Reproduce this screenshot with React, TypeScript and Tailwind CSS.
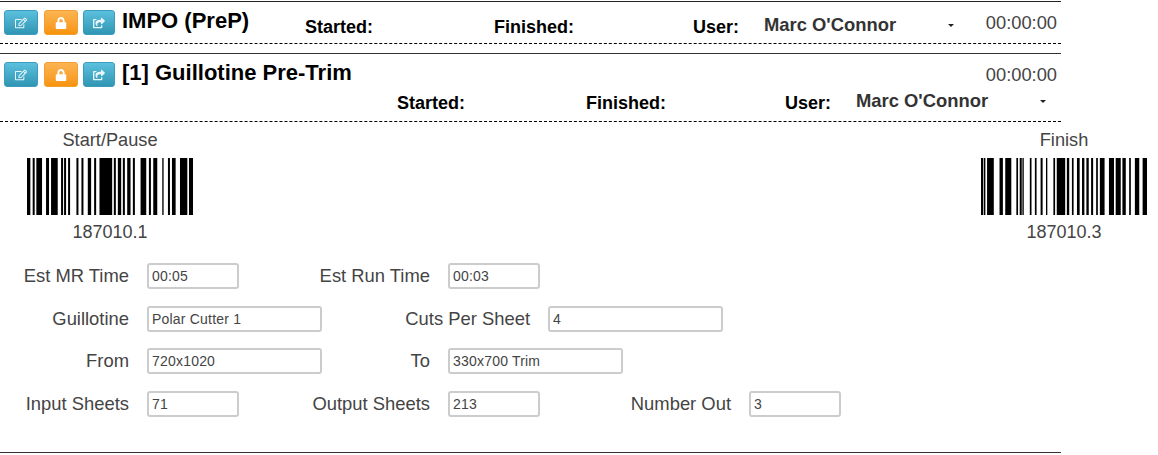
import { FaLock, FaRegEdit, FaShareSquare } from 'react-icons/fa';

// bar positions as [start, end], read off the picture at 3x
const startBars = [
  [80, 90], [97, 103], [108, 125], [137, 146], [152, 172], [182, 188], [191, 197], [203, 209],
  [228, 234], [243, 249], [262, 272], [281, 287], [297, 335], [340, 346], [352, 362], [367, 373],
  [380, 390], [397, 403], [420, 437], [445, 451], [458, 470], [485, 489], [502, 508], [514, 525],
  [538, 560], [565, 577],
];
const finishBars = [
  [65, 71], [73, 78], [83, 103], [120, 130], [137, 155], [170, 175], [180, 186], [188, 192],
  [210, 215], [225, 230], [242, 248], [258, 262], [280, 285], [290, 315], [320, 327], [335, 340],
  [350, 358], [365, 372], [378, 385], [392, 398], [407, 412], [418, 432], [445, 460], [465, 480],
  [485, 495], [505, 510], [522, 535], [545, 558],
];

const Barcode = ({ title, value, bars }: { title: string; value: string; bars: number[][] }) => {
  const first = bars[0][0];
  const last = bars[bars.length - 1][1];
  return (
    <div className="flex w-[166px] flex-col items-center">
      <div className="h-[27px] text-[18.2px] leading-[37px] text-[#444]">{title}</div>
      <svg className="mt-[9px] block h-[57px] w-[166px]" viewBox={`${first} 0 ${last - first} 57`} preserveAspectRatio="none">
        {bars.map(([a, b]) => (
          <rect key={a} x={a} y={0} width={b - a} height={57} fill="#000" />
        ))}
      </svg>
      <div className="mt-[6px] text-[18px] leading-[23px] text-[#444]">{value}</div>
    </div>
  );
};

const Buttons = () => {
  const blue = 'flex h-[25px] items-center justify-center rounded-[3px] border border-[#3b9cbc] bg-gradient-to-b from-[#5bc0de] to-[#2f96b4] text-[12px] text-[#e8f6fa]';
  return (
    <div className="flex">
      <button className={`${blue} w-[34px]`}><FaRegEdit /></button>
      <button className="ml-[6px] flex h-[25px] w-[34px] items-center justify-center rounded-[3px] border border-[#f0a033] bg-gradient-to-b from-[#fbb450] to-[#f89406] text-[12px] text-[#fff]"><FaLock /></button>
      <button className={`${blue} ml-[5px] w-[32px]`}><FaShareSquare /></button>
    </div>
  );
};

const Meta = () => (
  <div className="flex items-center text-[18px] leading-[20px]">
    <b className="w-[189px] font-bold text-black">Started:</b>
    <b className="w-[199px] font-bold text-black">Finished:</b>
    <b className="w-[71px] font-bold text-black">User:</b>
    <span className="mb-[3px] w-[184px] text-[18.4px] font-bold text-[#333]">Marc O'Connor</span>
    <span className="mb-[2px] h-0 w-0 border-x-[3px] border-t-[3px] border-x-transparent border-t-[#222]" />
  </div>
);

const Field = ({ label, value, labelW, inputW }: { label: string; value: string; labelW: string; inputW: string }) => (
  <>
    <label className={`${labelW} text-right text-[18.4px] leading-[26px] text-[#444]`}>{label}</label>
    <input
      readOnly
      value={value}
      className={`${inputW} ml-[18px] h-[26px] rounded-[3px] border-2 border-[#ccc] px-[3px] text-[14px] tracking-[0.2px] text-[#444] outline-none`}
    />
  </>
);

export default function App() {
  return (
    <div className="h-[455px] w-[1158px] overflow-hidden bg-white pt-px font-['Liberation_Sans',Arial,sans-serif]">
      <div className="w-[1061px]">
        <div className="flex h-[43px] items-start border-t border-b border-t-[#222] border-b-black pl-1 pt-[8px] [border-bottom-style:dashed]">
          <Buttons />
          <h1 className="ml-[7px] w-[183px] text-[22px] leading-[22px] font-bold text-black">IMPO (PreP)</h1>
          <div className="mt-[5px]"><Meta /></div>
          <span className="ml-auto mr-[4px] mt-[3px] text-[18.3px] leading-[20px] text-[#444]">00:00:00</span>
        </div>
        <div className="mt-[9px] h-[69px] border-t border-b border-t-[#333] border-b-black pl-1 pt-[8px] [border-bottom-style:dashed]">
          <div className="flex items-start">
            <Buttons />
            <h1 className="ml-[7px] text-[22px] leading-[22px] font-bold text-black">[1] Guillotine Pre-Trim</h1>
            <span className="ml-auto mr-[4px] mt-[3px] text-[18.3px] leading-[20px] text-[#444]">00:00:00</span>
          </div>
          <div className="mt-[4px] pl-[393px]"><Meta /></div>
        </div>
      </div>

      <div className="flex justify-between pl-[27px] pr-[11px]">
        <Barcode title="Start/Pause" value="187010.1" bars={startBars} />
        <Barcode title="Finish" value="187010.3" bars={finishBars} />
      </div>

      <div className="mt-[19px] flex flex-col gap-[16.5px]">
        <div className="flex items-center">
          <Field label="Est MR Time" value="00:05" labelW="w-[129px]" inputW="w-[92px]" />
          <Field label="Est Run Time" value="00:03" labelW="w-[191px]" inputW="w-[92px]" />
        </div>
        <div className="flex items-center">
          <Field label="Guillotine" value="Polar Cutter 1" labelW="w-[129px]" inputW="w-[175px]" />
          <Field label="Cuts Per Sheet" value="4" labelW="w-[208px]" inputW="w-[175px]" />
        </div>
        <div className="flex items-center">
          <Field label="From" value="720x1020" labelW="w-[129px]" inputW="w-[175px]" />
          <Field label="To" value="330x700 Trim" labelW="w-[108px]" inputW="w-[175px]" />
        </div>
        <div className="flex items-center">
          <Field label="Input Sheets" value="71" labelW="w-[129px]" inputW="w-[92px]" />
          <Field label="Output Sheets" value="213" labelW="w-[191px]" inputW="w-[92px]" />
          <Field label="Number Out" value="3" labelW="w-[191px]" inputW="w-[92px]" />
        </div>
      </div>
      <div className="mt-[35px] w-[1061px] border-t border-[#333]" />
    </div>
  );
}
